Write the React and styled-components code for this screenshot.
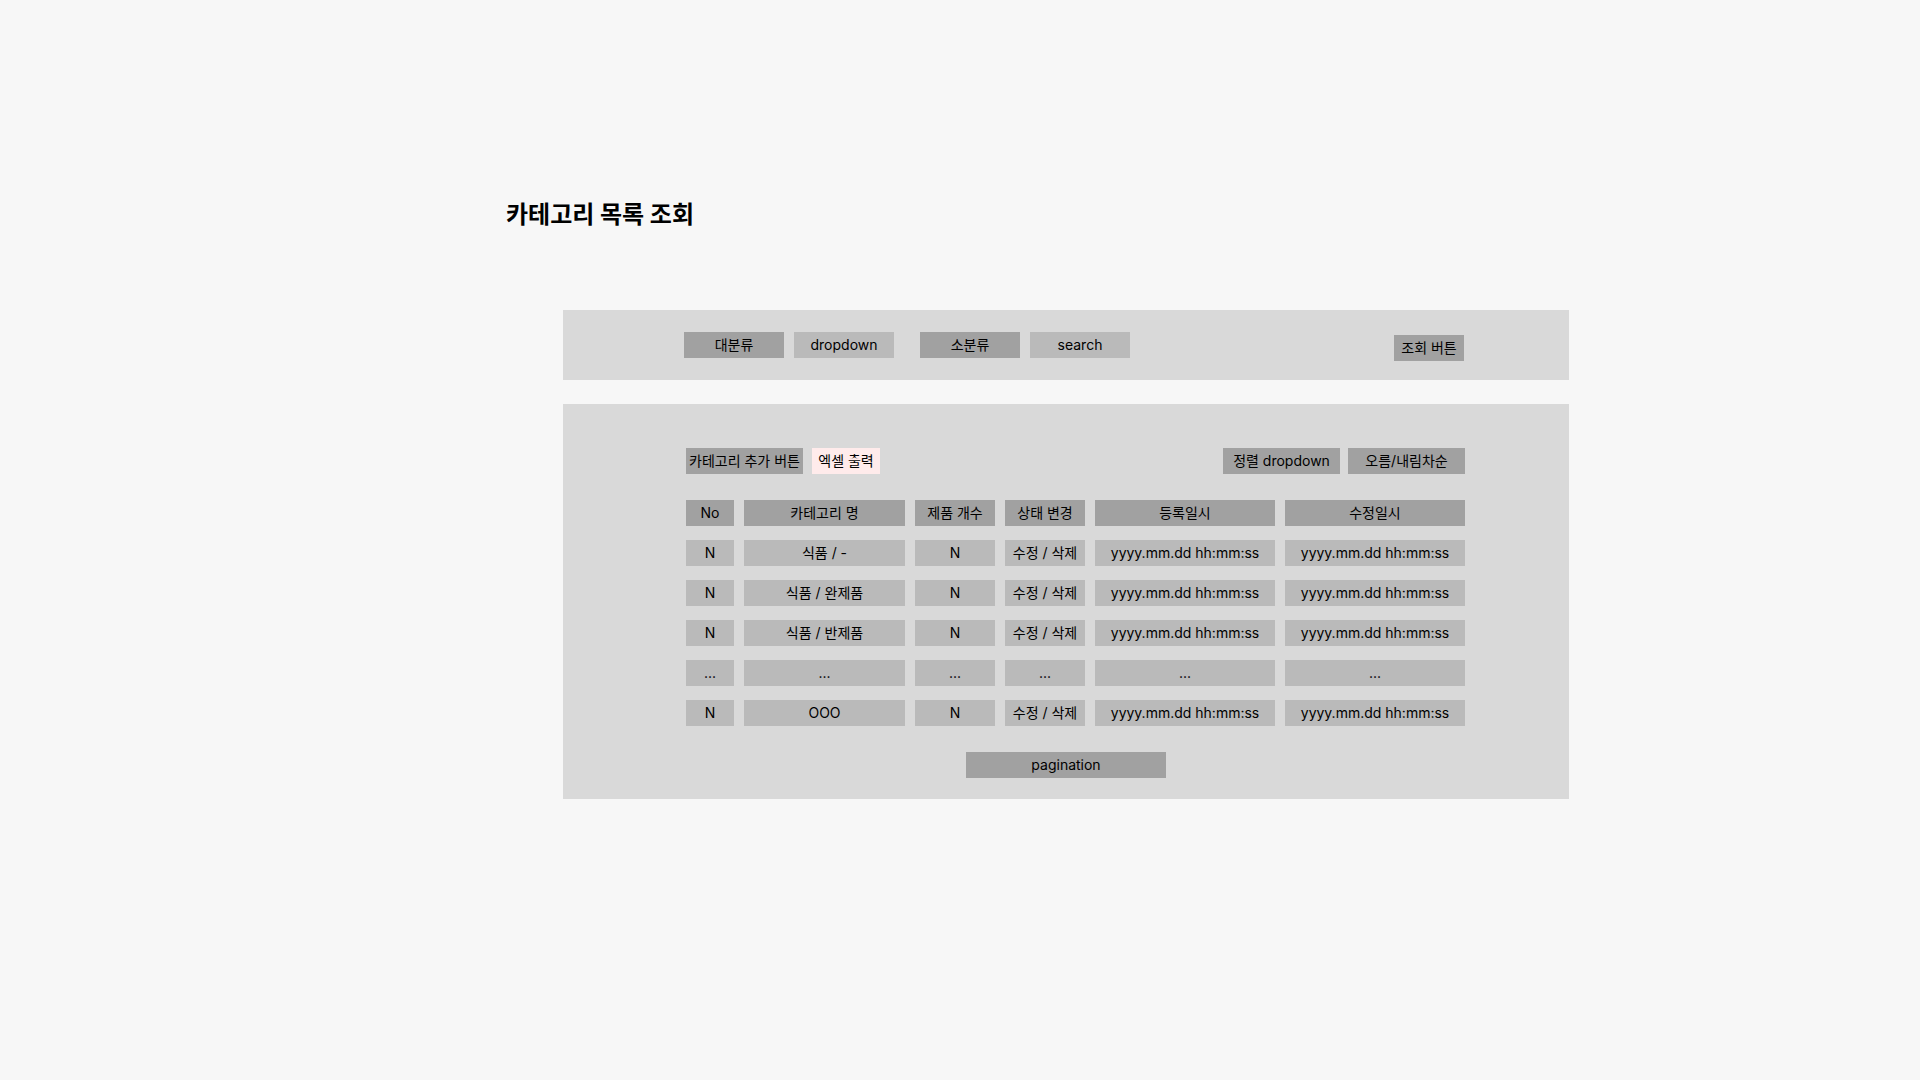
import React from 'react';
import styled, { createGlobalStyle, css } from 'styled-components';

const GlobalStyle = createGlobalStyle`
  *, *::before, *::after { box-sizing: border-box; }
  body {
    margin: 0;
    background: #f7f7f7;
    color: #000;
    font-family: Inter, "Noto Sans CJK KR", sans-serif;
    font-size: 14px;
    line-height: 26px;
  }
`;

const dark = '#a1a1a1';
const mid = '#bababa';

const Page = styled.main`
  padding: 200px 351px 200px 506px;
`;

const Title = styled.h1`
  margin: 0 0 80px;
  font-size: 24px;
  line-height: 30px;
  font-weight: 700;
`;

const Panels = styled.div`
  display: flex;
  flex-direction: column;
  gap: 24px;
  margin-left: 57px;
`;

const FilterPanel = styled.form`
  display: flex;
  justify-content: space-between;
  min-height: 70px;
  padding: 22px 105px 19px 121px;
  background: #d9d9d9;
`;

const Filters = styled.div`
  display: flex;
  align-items: flex-start;
  gap: 26px;
`;

const Field = styled.div`
  display: flex;
  gap: 10px;
`;

const chip = css`
  display: block;
  width: ${(p) => p.$width}px;
  height: 26px;
  margin: 0;
  padding: 0;
  border: 0;
  border-radius: 0;
  background: ${(p) => p.$color || dark};
  color: inherit;
  font: inherit;
  line-height: 26px;
  text-align: center;
  white-space: nowrap;
`;

const Label = styled.label`${chip}`;

const Button = styled.button`
  ${chip}
  cursor: pointer;
`;

const SubmitButton = styled(Button)`
  align-self: flex-end;
`;

const Select = styled.select`
  ${chip}
  appearance: none;
  text-align-last: center;
  cursor: pointer;
`;

const Input = styled.input`
  ${chip}
  &::placeholder {
    color: inherit;
    opacity: 1;
  }
`;

const ListPanel = styled.section`
  display: flex;
  flex-direction: column;
  gap: 12px;
  padding: 44px 0 21px;
  background: #d9d9d9;
`;

const ListBody = styled.div`
  display: flex;
  flex-direction: column;
  gap: 12px;
  padding: 0 104px 0 123px;
`;

const Toolbar = styled.div`
  display: flex;
  justify-content: space-between;
`;

const Group = styled.div`
  display: flex;
  gap: ${(p) => p.$gap}px;
`;

const TableWrap = styled.div`
  margin: 0 -10px;
`;

const Table = styled.table`
  width: 100%;
  table-layout: fixed;
  border-collapse: separate;
  border-spacing: 10px 14px;
`;

const Col = styled.col`
  width: ${(p) => (p.$width ? `${p.$width}px` : 'auto')};
`;

const cell = css`
  height: 26px;
  padding: 0;
  font-weight: 400;
  text-align: center;
  white-space: nowrap;
`;

const HeadCell = styled.th`
  ${cell}
  background: ${dark};
`;

const Cell = styled.td`
  ${cell}
  background: ${mid};
`;

const TextButton = styled.button`
  padding: 0;
  border: 0;
  background: none;
  color: inherit;
  font: inherit;
  cursor: pointer;
`;

const Pagination = styled.nav`
  ${chip}
  align-self: center;
`;

const columns = [
  { name: 'No', width: 48 },
  { name: '카테고리 명' },
  { name: '제품 개수', width: 80 },
  { name: '상태 변경', width: 80 },
  { name: '등록일시', width: 180 },
  { name: '수정일시', width: 180 },
];

const stamp = 'yyyy.mm.dd hh:mm:ss';
const rows = [
  { name: '식품 / -' },
  { name: '식품 / 완제품' },
  { name: '식품 / 반제품' },
  { skipped: true },
  { name: 'OOO' },
];

function Row({ row }) {
  if (row.skipped) {
    return (
      <tr>
        {columns.map((c) => (
          <Cell key={c.name}>...</Cell>
        ))}
      </tr>
    );
  }
  return (
    <tr>
      <Cell>N</Cell>
      <Cell>{row.name}</Cell>
      <Cell>N</Cell>
      <Cell>
        <TextButton type="button">수정</TextButton>
        {' / '}
        <TextButton type="button">삭제</TextButton>
      </Cell>
      <Cell>{stamp}</Cell>
      <Cell>{stamp}</Cell>
    </tr>
  );
}

export default function App() {
  return (
    <>
      <GlobalStyle />
      <Page>
        <Title>카테고리 목록 조회</Title>
        <Panels>
          <FilterPanel onSubmit={(e) => e.preventDefault()}>
            <Filters>
              <Field>
                <Label htmlFor="major" $width={100}>대분류</Label>
                <Select id="major" $width={100} $color={mid}>
                  <option>dropdown</option>
                </Select>
              </Field>
              <Field>
                <Label htmlFor="minor" $width={100}>소분류</Label>
                <Input id="minor" type="text" placeholder="search" $width={100} $color={mid} />
              </Field>
            </Filters>
            <SubmitButton type="submit" $width={70}>조회 버튼</SubmitButton>
          </FilterPanel>
          <ListPanel>
            <ListBody>
              <Toolbar>
                <Group $gap={9}>
                  <Button type="button" $width={117}>카테고리 추가 버튼</Button>
                  <Button type="button" $width={68} $color="#ffebeb">엑셀 출력</Button>
                </Group>
                <Group $gap={8}>
                  <Select aria-label="정렬" $width={117}>
                    <option>정렬 dropdown</option>
                  </Select>
                  <Button type="button" $width={117}>오름/내림차순</Button>
                </Group>
              </Toolbar>
              <TableWrap>
                <Table>
                  <colgroup>
                    {columns.map((c) => (
                      <Col key={c.name} $width={c.width} />
                    ))}
                  </colgroup>
                  <thead>
                    <tr>
                      {columns.map((c) => (
                        <HeadCell key={c.name} scope="col">{c.name}</HeadCell>
                      ))}
                    </tr>
                  </thead>
                  <tbody>
                    {rows.map((row, i) => (
                      <Row key={i} row={row} />
                    ))}
                  </tbody>
                </Table>
              </TableWrap>
            </ListBody>
            <Pagination $width={200}>pagination</Pagination>
          </ListPanel>
        </Panels>
      </Page>
    </>
  );
}
